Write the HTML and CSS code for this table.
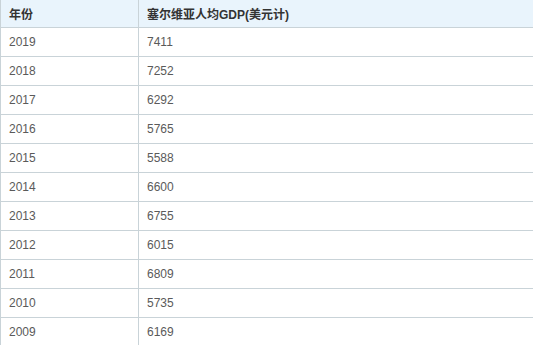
FILE: index.html
```html
<!DOCTYPE html>
<html lang="zh">
<head>
<meta charset="utf-8">
<link rel="stylesheet" href="styles.css">
</head>
<body>
<table class="data">
  <thead>
    <tr><th class="c1">年份</th><th>塞尔维亚人均GDP(美元计)</th></tr>
  </thead>
  <tbody>
    <tr><td>2019</td><td>7411</td></tr>
    <tr><td>2018</td><td>7252</td></tr>
    <tr><td>2017</td><td>6292</td></tr>
    <tr><td>2016</td><td>5765</td></tr>
    <tr><td>2015</td><td>5588</td></tr>
    <tr><td>2014</td><td>6600</td></tr>
    <tr><td>2013</td><td>6755</td></tr>
    <tr><td>2012</td><td>6015</td></tr>
    <tr><td>2011</td><td>6809</td></tr>
    <tr><td>2010</td><td>5735</td></tr>
    <tr><td>2009</td><td>6169</td></tr>
  </tbody>
</table>
</body>
</html>
```

FILE: styles.css
```css
html, body { margin: 0; padding: 0; background: #fff; }
body { font-family: "Liberation Sans", "Noto Sans CJK SC", sans-serif; font-size: 12px; color: #5a5a5a; }
.data { border-collapse: collapse; width: 534px; table-layout: fixed; }
.data th, .data td { border: 1px solid #c9d3d8; padding: 0 0 0 8px; text-align: left; vertical-align: middle; }
.data th { height: 27px; background: #e9f4fc; color: #333; font-weight: bold; border-top: 0; }
.data td { height: 28px; }
.data .c1 { width: 129px; }
```
